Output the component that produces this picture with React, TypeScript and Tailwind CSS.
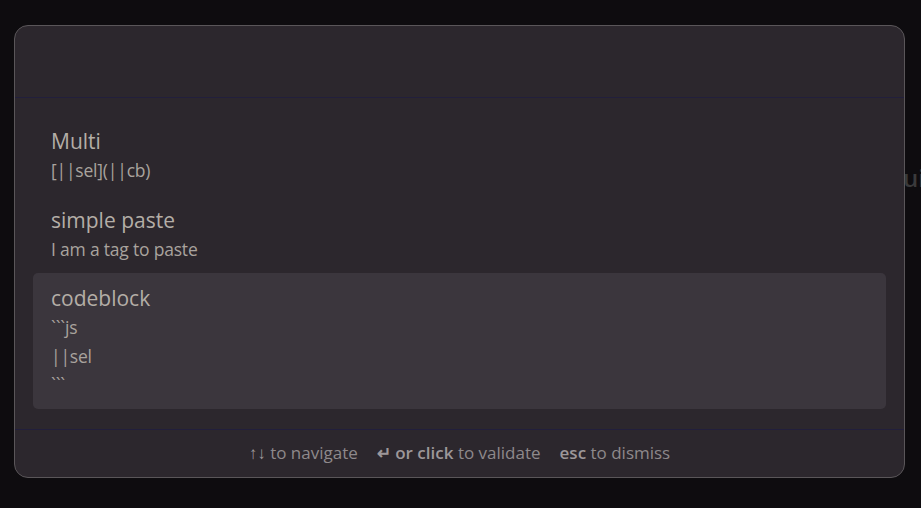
const FONT = "font-['Segoe_UI','Open_Sans','Noto_Sans',sans-serif]";

type Suggestion = { id: string; name: string; lines: string[] };

const suggestions: Suggestion[] = [
  { id: "multi", name: "Multi", lines: ["[||sel](||cb)"] },
  { id: "simple", name: "simple paste", lines: ["I am a tag to paste"] },
  { id: "code", name: "codeblock", lines: ["```js", "||sel", "```"] },
];

const SELECTED = "code";

function SuggestionItem({ item, selected }: { item: Suggestion; selected: boolean }) {
  return (
    <div
      className={
        selected
          ? "rounded-[5px] bg-[#3b363d] px-[18px] pt-[10px] pb-[10px]"
          : "rounded-[5px] px-[18px] pt-[10px] pb-[10px]"
      }
    >
      <div className="text-[21px] leading-[30px] text-[#b4aea7]">{item.name}</div>
      {item.lines.map((l, i) => (
        <div key={i} className="text-[17.5px] leading-[28.5px] tracking-[-0.2px] text-[#a9a39e]">
          {l}
        </div>
      ))}
    </div>
  );
}

export default function App() {
  return (
    <div className={`relative h-[508px] w-[921px] overflow-hidden bg-[#0e0c0f] ${FONT}`}>
      {/* content behind the modal */}
      <div className="pt-[160px] pl-[884px] text-[24px] font-semibold whitespace-nowrap text-[#3a3a3b]">
        QuickAdd
      </div>

      <div className="absolute top-[25px] left-[14px] flex w-[891px] flex-col rounded-[14px] border border-[#5a5659] bg-[#2c272d]">
        <div className="h-[72px] border-b border-[#221f3c]" />
        <div className="flex flex-col px-[18px] pt-[18px] pb-[20px]">
          {suggestions.map((s) => (
            <SuggestionItem key={s.id} item={s} selected={s.id === SELECTED} />
          ))}
        </div>
        <div className="flex h-[48px] items-center justify-center gap-[19px] border-t border-[#221f3c] text-[17px] text-[#8e898b]">
          <span>
            <span className="font-semibold text-[#9d9799]">↑↓</span> to navigate
          </span>
          <span>
            <span className="font-semibold text-[#9d9799]">↵ or click</span> to validate
          </span>
          <span>
            <span className="font-semibold text-[#9d9799]">esc</span> to dismiss
          </span>
        </div>
      </div>
    </div>
  );
}
